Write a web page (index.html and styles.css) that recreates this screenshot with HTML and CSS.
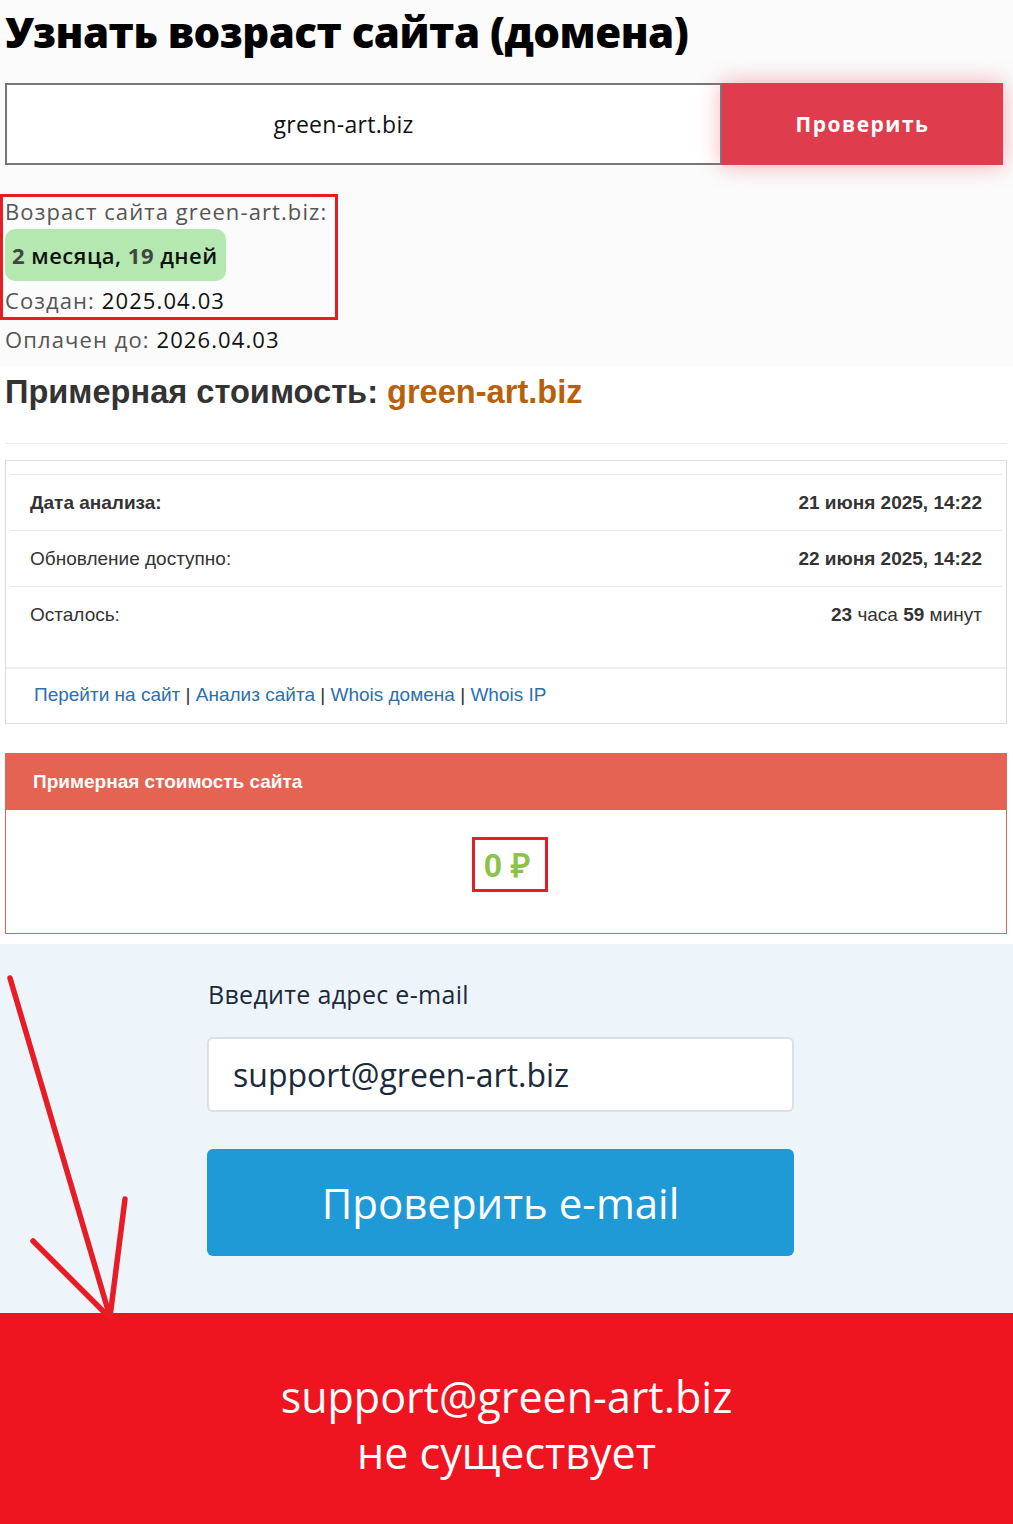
FILE: index.html
```html
<!DOCTYPE html>
<html lang="ru">
<head>
  <meta charset="UTF-8" />
  <meta name="viewport" content="width=device-width, initial-scale=1.0"/>
  <title>Узнать возраст сайта (домена)</title>
  <link rel="stylesheet" href="styles.css">
</head>
<body>
  <div class="age-tool">
    <h1>Узнать возраст сайта (домена)</h1>
    <form class="check-form" onsubmit="return false">
      <input class="domain-input" type="text" value="green-art.biz"/>
      <button class="check-btn" type="submit">Проверить</button>
    </form>
    <div class="age-result">
      <div class="age-label">Возраст сайта green-art.biz:</div>
      <div class="age-pill"><b>2</b> месяца, <b>19</b> дней</div>
      <div class="age-line">Создан: <span>2025.04.03</span></div>
    </div>
    <div class="age-line paid">Оплачен до: <span>2026.04.03</span></div>
  </div>

  <div class="cost">
    <h2>Примерная стоимость: <span class="cost-domain">green-art.biz</span></h2>
    <hr class="cost-hr">
    <div class="info-card">
      <table class="info-table">
        <tr>
          <th>Дата анализа:</th>
          <td><b>21 июня 2025, 14:22</b></td>
        </tr>
        <tr>
          <td class="key">Обновление доступно:</td>
          <td><b>22 июня 2025, 14:22</b></td>
        </tr>
        <tr>
          <td class="key">Осталось:</td>
          <td><b>23</b> часа <b>59</b> минут</td>
        </tr>
      </table>
      <div class="info-links">
        <a href="#">Перейти на сайт</a> | <a href="#">Анализ сайта</a> | <a href="#">Whois домена</a> | <a href="#">Whois IP</a>
      </div>
    </div>
    <div class="price-panel">
      <div class="price-head">Примерная стоимость сайта</div>
      <div class="price-body"><span class="price-value">0 ₽</span></div>
    </div>
  </div>

  <div class="email-wrap">
    <svg class="arrow" width="140" height="380" viewBox="0 0 140 380">
      <g stroke="#e81c26" stroke-width="5.5" stroke-linecap="round" fill="none">
        <line x1="10" y1="34" x2="110" y2="373"/>
        <line x1="125" y1="255" x2="110" y2="373"/>
        <line x1="33" y1="297" x2="108" y2="372"/>
      </g>
    </svg>
    <div class="email-check">
      <div class="email-col">
        <label class="email-label" for="email">Введите адрес e-mail</label>
        <input id="email" class="email-input" type="text" value="support@green-art.biz"/>
        <button class="email-btn" type="button">Проверить e-mail</button>
      </div>
    </div>
    <div class="email-bad">
      support@green-art.biz<br>
      не существует
    </div>
  </div>
</body>
</html>
```

FILE: styles.css
```css
body {
  margin: 0;
  background: #fff;
  font-family: "Open Sans", sans-serif;
  color: #111;
}
.age-tool {
  background: #fbfbfb;
  padding: 8px 10px 13px 0;
}
h1 {
  margin: 0 0 27px 5px;
  font-size: 42px;
  line-height: 48px;
  font-weight: 800;
  letter-spacing: -0.5px;
  color: #000;
}
.check-form {
  display: flex;
  height: 82px;
  margin-left: 5px;
}
.domain-input {
  box-sizing: border-box;
  width: 717px;
  height: 82px;
  border: 2px solid #777;
  background: #fff;
  padding: 0 40px 0 0;
  text-align: center;
  font-family: "Open Sans", sans-serif;
  font-size: 23px;
  letter-spacing: 0.3px;
  color: #111;
  outline: none;
}
.check-btn {
  width: 281px;
  height: 82px;
  border: none;
  background: #df3d4e;
  color: #fff;
  font-family: "Open Sans", sans-serif;
  font-weight: 700;
  font-size: 21px;
  letter-spacing: 1.5px;
  box-shadow: 0 0 22px rgba(232, 70, 86, .45);
  cursor: pointer;
}
.age-result {
  display: inline-block;
  margin-top: 29px;
  border: 3px solid #e31e24;
  padding: 0 8px 3px 2px;
}
.age-label, .age-line {
  font-size: 22px;
  line-height: 28px;
  letter-spacing: 1.1px;
  color: #555;
}
.age-line span {
  color: #111;
}
.age-pill {
  display: inline-block;
  margin: 4px 0 5px 0;
  padding: 0 8px 0 7px;
  height: 52px;
  line-height: 52px;
  background: #b5e8b0;
  border-radius: 10px;
  font-size: 22px;
  font-weight: 600;
  letter-spacing: 0.5px;
  color: #111;
}
.age-pill b {
  color: #444;
  font-weight: 700;
}
.paid {
  margin: 5px 0 0 5px;
}
.cost {
  padding: 6px 6px 0 5px;
  font-family: "Liberation Sans", Arial, sans-serif;
}
h2 {
  margin: 0;
  font-size: 32.6px;
  line-height: 40px;
  font-weight: 700;
  color: #333;
}
.cost-domain {
  color: #b8610a;
}
.cost-hr {
  margin: 31px 0 16px;
  border: none;
  border-top: 1px solid #eee;
}
.info-card {
  border: 1px solid #ddd;
  padding: 13px 0 0;
}
.info-table {
  width: calc(100% - 8px);
  margin: 0 4px 25px;
  border-collapse: collapse;
  font-size: 19px;
  color: #333;
}
.info-table th, .info-table td {
  height: 55px;
  padding: 0 20px;
  border-top: 1px solid #e8e8e8;
  text-align: right;
}
.info-table th, .info-table td.key {
  text-align: left;
}
.info-table th {
  font-weight: 700;
}
.info-links {
  border-top: 2px solid #eee;
  height: 54px;
  line-height: 52px;
  padding: 0 28px;
  font-size: 19px;
  color: #333;
}
.info-links a {
  color: #2c6fb0;
  text-decoration: none;
}
.price-panel {
  margin-top: 29px;
  border: 1px solid #e46352;
}
.price-head {
  height: 56px;
  line-height: 56px;
  padding: 0 27px;
  background: #e46352;
  color: #fff;
  font-size: 19px;
  font-weight: 700;
}
.price-body {
  height: 123px;
  display: flex;
  align-items: center;
  justify-content: center;
  padding: 0 0 14px 8px;
  box-sizing: border-box;
}
.price-value {
  display: inline-block;
  border: 3px solid #e31e24;
  padding: 2px 15px 2px 9px;
  font-size: 33px;
  font-weight: 700;
  color: #8bc34a;
}
.email-wrap {
  position: relative;
  margin-top: 10px;
}
.arrow {
  position: absolute;
  left: 0;
  top: 0;
  z-index: 2;
}
.email-check {
  background: #eef5fa;
  padding: 35px 0 57px 207px;
}
.email-col {
  width: 587px;
  display: flex;
  flex-direction: column;
}
.email-label {
  font-size: 25px;
  line-height: 30px;
  color: #1b2a3b;
  letter-spacing: 0.3px;
  padding-left: 1px;
}
.email-input {
  box-sizing: border-box;
  margin-top: 28px;
  height: 75px;
  border: 2px solid #dcdfe3;
  border-radius: 6px;
  background: #fff;
  padding: 0 24px;
  font-family: "Open Sans", sans-serif;
  font-size: 32px;
  color: #1b2a3b;
  outline: none;
}
.email-btn {
  margin-top: 37px;
  height: 107px;
  border: none;
  border-radius: 6px;
  background: #1f9ad6;
  color: #fff;
  font-family: "Open Sans", sans-serif;
  font-size: 42px;
  cursor: pointer;
}
.email-bad {
  background: #ef1520;
  padding: 56px 0 44px;
  text-align: center;
  color: #fff;
  font-size: 43px;
  line-height: 56px;
}
```
